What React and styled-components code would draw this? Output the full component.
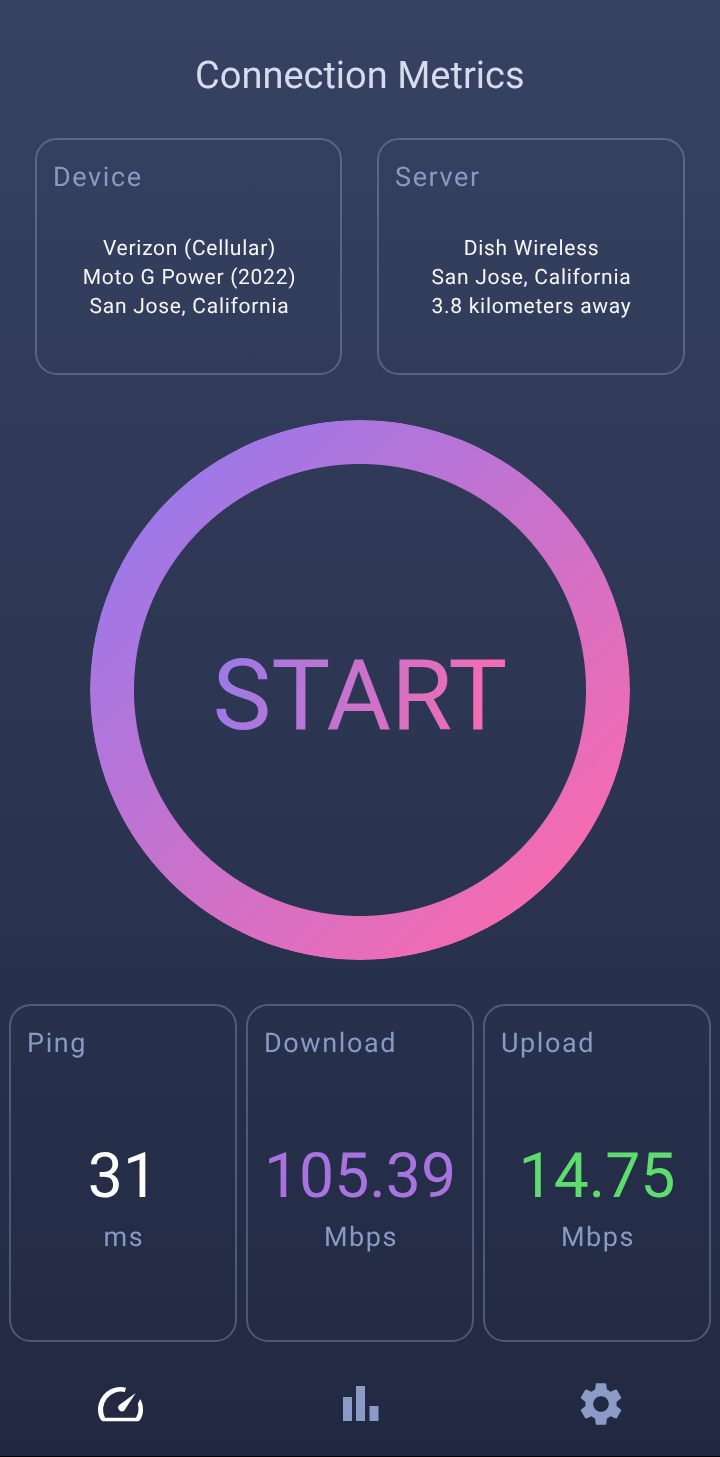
import React from "react";
import styled, { createGlobalStyle } from "styled-components";

const GlobalStyle = createGlobalStyle`
  html, body {
    margin: 0;
    padding: 0;
    background: #000;
  }
  * {
    box-sizing: border-box;
  }
`;

const Screen = styled.div`
  width: 720px;
  height: 1456px;
  overflow: hidden;
  display: flex;
  flex-direction: column;
  align-items: center;
  background: linear-gradient(180deg, #374262 0%, #212942 100%);
  font-family: Roboto, "Liberation Sans", sans-serif;
  text-rendering: geometricPrecision;
`;

// own layer, so the text is drawn with grey antialiasing like on the phone
const Title = styled.h1`
  margin: 0;
  height: 138px;
  padding-top: 51px;
  font-size: 38px;
  line-height: 50px;
  font-weight: 400;
  color: #d6dcee;
  text-align: center;
  will-change: transform;
`;

const InfoRow = styled.div`
  width: 650px;
  display: flex;
  gap: 35px;
`;

const Card = styled.section`
  border: 2px solid rgba(160, 172, 205, 0.35);
  border-radius: 22px;
  display: flex;
  flex-direction: column;
  will-change: transform;
`;

const InfoCard = styled(Card)`
  width: ${(props) => (props.$wide ? "308px" : "307px")};
  height: 237px;
  padding: 21px ${(props) => (props.$wide ? "17px" : "16px")} 0 16px;
`;

const CardLabel = styled.div`
  font-size: 27px;
  line-height: 32px;
  letter-spacing: 1.6px;
  color: #8a99c4;
`;

const InfoText = styled.div`
  margin-top: 42px;
  padding-left: 2px;
  font-size: 21px;
  line-height: 29px;
  letter-spacing: 0.72px;
  color: #f4f6fc;
  text-align: center;
`;

const StartRing = styled.button`
  position: relative;
  width: 540px;
  height: 540px;
  margin: 45px 0 44px;
  flex: none;
  padding: 10px 0 0;
  border: none;
  background: none;
  font-family: inherit;
  display: flex;
  align-items: center;
  justify-content: center;

  &::before {
    content: "";
    position: absolute;
    inset: 0;
    border-radius: 50%;
    background: linear-gradient(135deg, #9d78e8 14%, #f56bb0 86%);
    mask: radial-gradient(circle closest-side, transparent 225.5px, #000 226.5px);
  }
`;

const StartLabel = styled.span`
  font-size: 99px;
  line-height: 110px;
  font-weight: 400;
  background: linear-gradient(105deg, #9a7ae8 4%, #fb6bad 96%);
  -webkit-background-clip: text;
  background-clip: text;
  color: transparent;
`;

const MetricRow = styled.div`
  width: 702px;
  display: flex;
  justify-content: space-between;
`;

const MetricCard = styled(Card)`
  width: 228px;
  height: 338px;
  padding: 21px 16px 0;
  align-items: stretch;
`;

const MetricValue = styled.div`
  margin: 86px -16px 0;
  font-size: 62.5px;
  line-height: 64px;
  color: ${(props) => props.$color};
  text-align: center;
`;

const MetricUnit = styled.div`
  margin: 12px -16px 0 -14px;
  font-size: 27px;
  line-height: 32px;
  letter-spacing: 1.6px;
  color: #8a99c4;
  text-align: center;
`;

const NavBar = styled.nav`
  width: 720px;
  flex: 1;
  padding: 10px 0 0 1px;
  display: grid;
  grid-template-columns: 240px 240px 239px;
  align-items: center;
  justify-items: center;
`;

const NavIcon = styled.svg`
  display: block;
  fill: ${(props) => (props.$active ? "#ffffff" : "#8c9bc6")};
`;

const GaugeIcon = () => (
  <NavIcon $active width="48" height="48" viewBox="0 0 48 48">
    <path d="M29 7.700A22.500 22.500 0 0 0 1 29.500c0 4 1 7.500 2.700 10 .8 1.200 1.600 1.800 3.300 1.800h33c1.700 0 2.500-.6 3.300-1.800C45 37 46 33.500 46 29.500c0-3.800-1-7.400-2.700-10.600l-2.500 4.800A18 18 0 0 1 39 37.800H8A18 18 0 0 1 27.800 12z" />
    <path d="M38.700 13 27.300 30.500A3.800 3.800 0 0 1 21.900 25.300z" />
  </NavIcon>
);

const BarsIcon = () => (
  <NavIcon width="40" height="36" viewBox="0 0 40 36">
    <rect x="2" y="11" width="9" height="24" />
    <rect x="15" y="0" width="9" height="35" />
    <rect x="28.500" y="20" width="9" height="15" />
  </NavIcon>
);

const GearIcon = () => (
  <NavIcon width="52" height="52" viewBox="0 0 24 24">
    <path d="M19.140 12.940c.04-.3.06-.61.06-.94 0-.32-.02-.64-.07-.94l2.030-1.580a.49.490 0 0 0 .12-.61l-1.920-3.320a.488.488 0 0 0-.59-.22l-2.390.96c-.5-.38-1.030-.7-1.620-.94l-.36-2.540a.484.484 0 0 0-.48-.41h-3.840c-.24 0-.43.17-.47.41l-.36 2.540c-.59.24-1.130.57-1.620.94l-2.390-.96c-.22-.08-.47 0-.59.22L2.740 8.870c-.12.21-.08.47.12.61l2.030 1.580c-.05.3-.09.63-.09.94s.02.640.07.940l-2.030 1.580a.49.490 0 0 0-.12.610l1.920 3.320c.12.220.37.290.59.220l2.390-.960c.5.380 1.030.700 1.620.940l.36 2.540c.05.240.24.410.48.410h3.840c.24 0 .44-.170.47-.410l.36-2.540c.59-.240 1.130-.560 1.620-.940l2.390.960c.22.080.47 0 .59-.220l1.920-3.320c.12-.220.07-.470-.12-.610l-2.010-1.580zM12 15.600c-1.980 0-3.600-1.620-3.600-3.600s1.620-3.600 3.600-3.600 3.600 1.620 3.600 3.600-1.620 3.600-3.600 3.600z" />
  </NavIcon>
);

const metrics = [
  { label: "Ping", value: "31", unit: "ms", color: "#ffffff" },
  { label: "Download", value: "105.39", unit: "Mbps", color: "#a873de" },
  { label: "Upload", value: "14.75", unit: "Mbps", color: "#5edc6e" },
];

const App = () => {
  return (
    <Screen>
      <GlobalStyle />
      <Title>Connection Metrics</Title>
      <InfoRow>
        <InfoCard>
          <CardLabel>Device</CardLabel>
          <InfoText>
            Verizon (Cellular)
            <br />
            Moto G Power (2022)
            <br />
            San Jose, California
          </InfoText>
        </InfoCard>
        <InfoCard $wide>
          <CardLabel>Server</CardLabel>
          <InfoText>
            Dish Wireless
            <br />
            San Jose, California
            <br />
            3.8 kilometers away
          </InfoText>
        </InfoCard>
      </InfoRow>
      <StartRing>
        <StartLabel>START</StartLabel>
      </StartRing>
      <MetricRow>
        {metrics.map((m) => (
          <MetricCard key={m.label}>
            <CardLabel>{m.label}</CardLabel>
            <MetricValue $color={m.color}>{m.value}</MetricValue>
            <MetricUnit>{m.unit}</MetricUnit>
          </MetricCard>
        ))}
      </MetricRow>
      <NavBar>
        <GaugeIcon />
        <BarsIcon />
        <GearIcon />
      </NavBar>
    </Screen>
  );
};

export default App;
